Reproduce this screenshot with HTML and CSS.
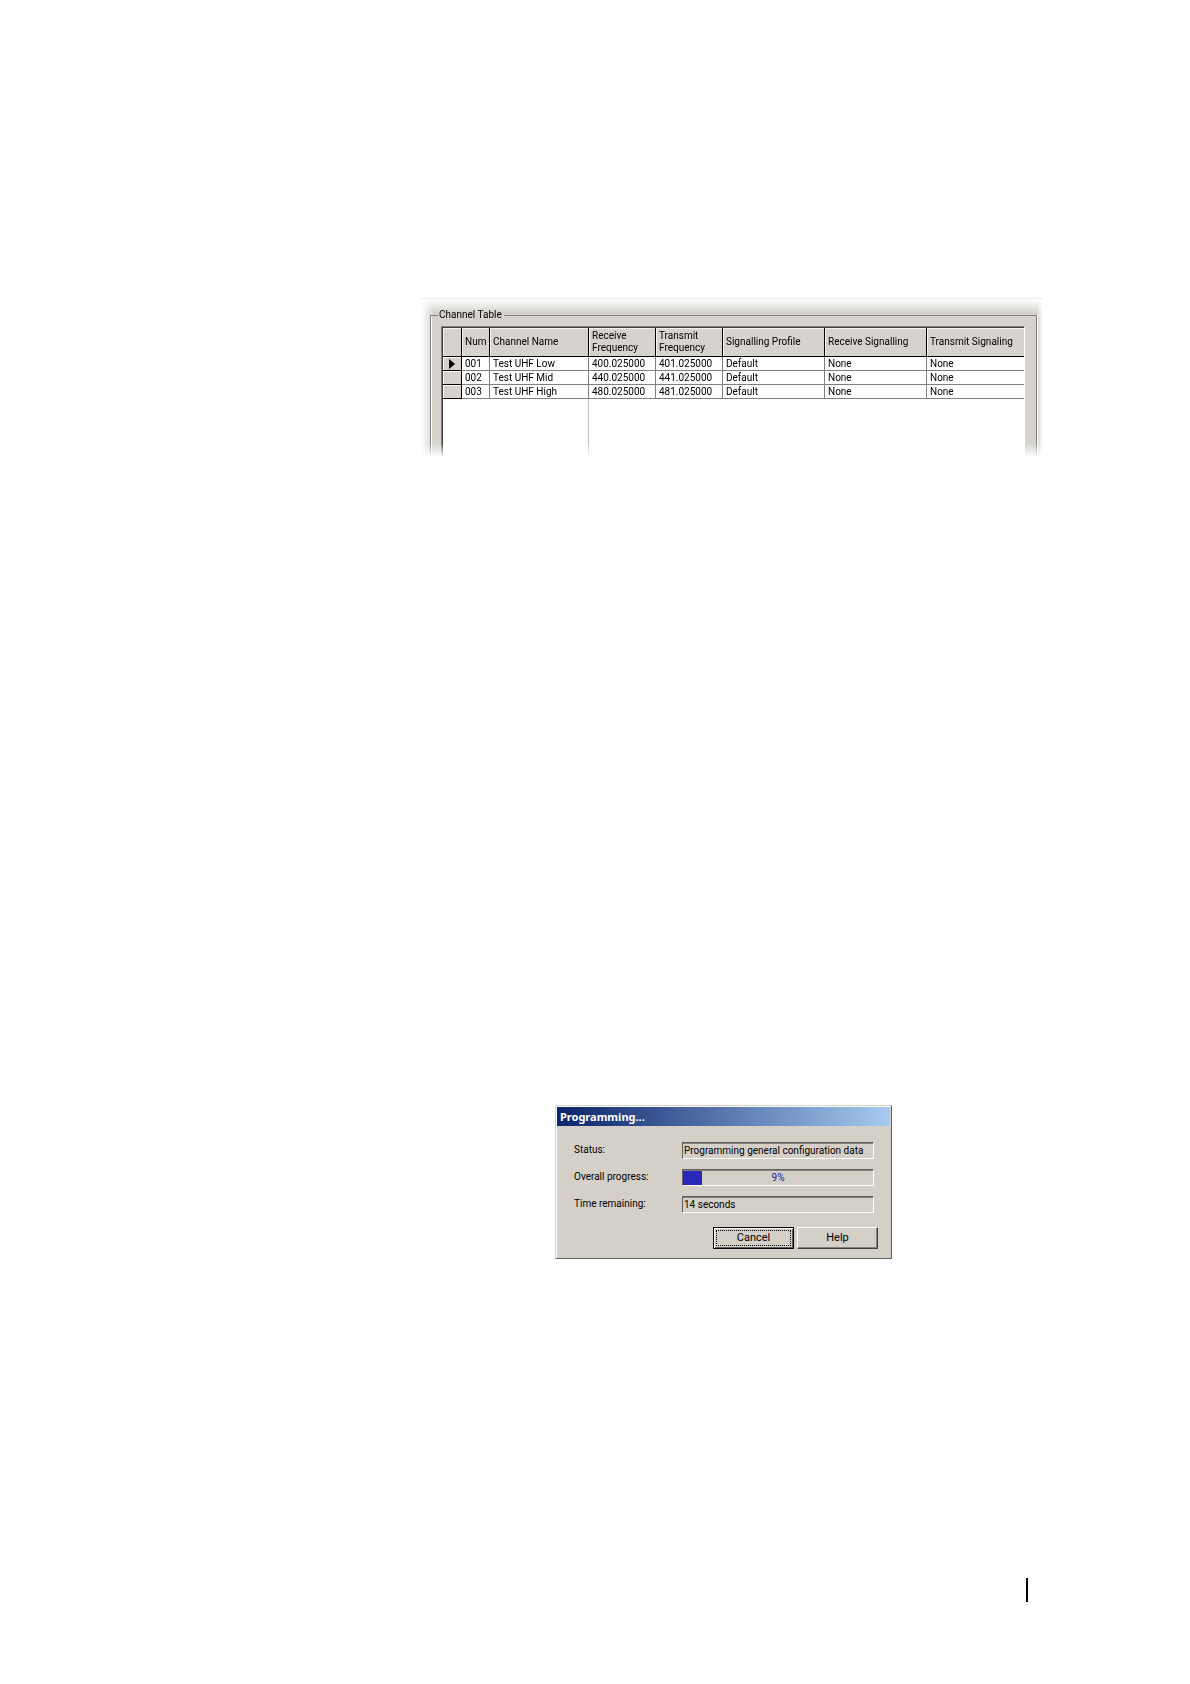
FILE: index.html
```html
<!DOCTYPE html>
<html lang="en">
<head>
<meta charset="utf-8">
<title>Channel Table</title>
<link rel="stylesheet" href="styles.css">
</head>
<body>
<main class="page">
  <section class="panel">
    <fieldset class="group">
      <legend>Channel Table</legend>
      <div class="grid">
        <table class="channels">
          <colgroup>
            <col class="c-mark"><col class="c-num"><col class="c-name"><col class="c-freq"><col class="c-freq"><col class="c-wide"><col class="c-wide"><col>
          </colgroup>
          <thead>
            <tr>
              <th></th>
              <th scope="col">Num</th>
              <th scope="col">Channel Name</th>
              <th scope="col">Receive<br>Frequency</th>
              <th scope="col">Transmit<br>Frequency</th>
              <th scope="col">Signalling Profile</th>
              <th scope="col">Receive Signalling</th>
              <th scope="col">Transmit Signaling</th>
            </tr>
          </thead>
          <tbody>
            <tr><td class="mark"><svg class="arrow" viewBox="0 0 6 10" aria-hidden="true"><path d="M0 0L6 5L0 10Z"/></svg></td><td>001</td><td>Test UHF Low</td><td>400.025000</td><td>401.025000</td><td>Default</td><td>None</td><td>None</td></tr>
            <tr><td class="mark"></td><td>002</td><td>Test UHF Mid</td><td>440.025000</td><td>441.025000</td><td>Default</td><td>None</td><td>None</td></tr>
            <tr><td class="mark"></td><td>003</td><td>Test UHF High</td><td>480.025000</td><td>481.025000</td><td>Default</td><td>None</td><td>None</td></tr>
            <tr class="rest"><td colspan="3"></td><td colspan="5"></td></tr>
          </tbody>
        </table>
      </div>
    </fieldset>
  </section>

  <section class="dialog" role="dialog" aria-labelledby="dialog-title">
    <h1 class="title" id="dialog-title">Programming...</h1>
    <form class="form">
      <div class="fields">
        <label for="status">Status:</label>
        <input class="sunken" id="status" type="text" value="Programming general configuration data" readonly>
        <span id="progress-label">Overall progress:</span>
        <div class="sunken progress" role="progressbar" aria-labelledby="progress-label" aria-valuenow="9" aria-valuemin="0" aria-valuemax="100">
          <div class="bar" style="width: 10%"></div>
          <span class="percent">9%</span>
        </div>
        <label for="remaining">Time remaining:</label>
        <input class="sunken" id="remaining" type="text" value="14 seconds" readonly>
      </div>
      <div class="actions">
        <button class="button default" type="button"><span class="focus">Cancel</span></button>
        <button class="button" type="button">Help</button>
      </div>
    </form>
  </section>

  <footer class="footer"><div class="rule"></div></footer>
</main>
</body>
</html>
```
FILE: styles.css
```css
* {
  box-sizing: border-box;
}

body {
  margin: 0;
  background: #fff;
  color: #000;
  font: 10px/14px Roboto, "Liberation Sans", Arial, sans-serif;
}

.page {
  display: flex;
  flex-direction: column;
  min-height: 100vh;
  padding: 298px 147px 82px 421px;
}

/* Channel table, cut off with soft edges */
.panel {
  padding: 9px 6px 0 9px;
  border-top: 1px solid #ececea;
  background:
    linear-gradient(to right, #fff, transparent 12px),
    linear-gradient(to left, #fff, transparent 6px),
    linear-gradient(to bottom, #fff, transparent 14px),
    #d6d3ce;
  -webkit-mask-image: linear-gradient(to top, transparent, #000 14px);
  mask-image: linear-gradient(to top, transparent, #000 14px);
}

.group {
  min-width: 0;
  margin: 0;
  padding: 4px 11px 0 10px;
  border: 1px solid #808080;
  border-bottom: 0;
  box-shadow: inset 1px 0 #fff, 1px 0 #fff;
}

.group legend {
  margin-left: -3px;
  padding: 0 2px 0 1px;
}

.grid {
  border: 1px solid #808080;
  border-right-color: #fff;
  border-bottom: 0;
  background: #fff;
}

.channels {
  width: 100%;
  table-layout: fixed;
  border-collapse: separate;
  border-spacing: 0;
  border-left: 1px solid #404040;
  border-top: 1px solid #404040;
}

.c-mark { width: 19px; }
.c-num { width: 28px; }
.c-name { width: 99px; }
.c-freq { width: 67px; }
.c-wide { width: 102px; }

.channels th,
.channels td {
  padding: 0 0 0 3px;
  border-right: 1px solid #808080;
  border-bottom: 1px solid #808080;
  text-align: left;
  font-weight: normal;
  white-space: nowrap;
}

.channels th {
  height: 29px;
  border-right-color: #000;
  border-bottom-color: #000;
  background: #d6d3ce;
  box-shadow: inset 1px 1px #f4f2ee;
  line-height: 12px;
}

.channels td {
  height: 14px;
  line-height: 13px;
}

.channels .mark {
  padding: 0 0 0 6px;
  border-color: #000;
  background: #d6d3ce;
  box-shadow: inset 1px 1px #fff;
}

.arrow {
  display: block;
  width: 6px;
  height: 10px;
}

.channels th:last-child,
.channels td:last-child {
  border-right: 0;
}

.channels .rest td {
  height: 58px;
  border-bottom: 0;
  border-right-color: #c0c0c0;
}

/* Progress dialog */
.dialog {
  width: 337px;
  max-width: 100%;
  margin: 648px 0 0 134px;
  padding: 1px;
  border: 1px solid;
  border-color: #d6d3ce #606060 #606060 #d6d3ce;
  background: #d4d0c8;
  box-shadow: inset 1px 1px #fff;
}

.title {
  margin: 0 0 1px;
  padding: 0 3px;
  background: linear-gradient(to right, #0a246a, #a6caf0);
  color: #fff;
  font: bold 11px/19px "Noto Sans", "DejaVu Sans", sans-serif;
}

.form {
  padding: 15px 12px 8px 17px;
}

.fields {
  display: grid;
  grid-template-columns: 108px 1fr;
  row-gap: 10px;
  margin-right: 4px;
}

.fields label,
.fields > span {
  line-height: 15px;
}

.sunken {
  width: 100%;
  height: 17px;
  padding: 0 1px;
  border: 1px solid;
  border-color: #606060 #fff #fff #606060;
  border-radius: 0;
  outline: 0;
  background: #d4d0c8;
  box-shadow: inset 0 1px #808080;
  color: inherit;
  font: inherit;
}

.progress {
  display: grid;
  padding: 1px 0 0;
}

.bar,
.percent {
  grid-area: 1 / 1;
}

.bar {
  background: #2a28b8;
}

.percent {
  color: #1c1a9c;
  text-align: center;
}

.actions {
  display: flex;
  justify-content: flex-end;
  gap: 3px;
  margin-top: 14px;
}

.button {
  width: 81px;
  height: 22px;
  padding: 0;
  border: 1px solid;
  border-color: #fff #404040 #404040 #fff;
  background: #d4d0c8;
  box-shadow: inset -1px -1px #808080;
  color: #000;
  font: inherit;
  font-size: 11px;
}

.default {
  padding: 2px;
  border-color: #000;
  box-shadow: inset 1px 1px #fff, inset -1px -1px #606060;
}

.focus {
  display: block;
  border: 1px dotted #000;
  line-height: 14px;
}

.footer {
  display: flex;
  justify-content: flex-end;
  margin-top: auto;
  padding-right: 15px;
}

.rule {
  width: 2px;
  height: 24px;
  background: #000;
}
```
